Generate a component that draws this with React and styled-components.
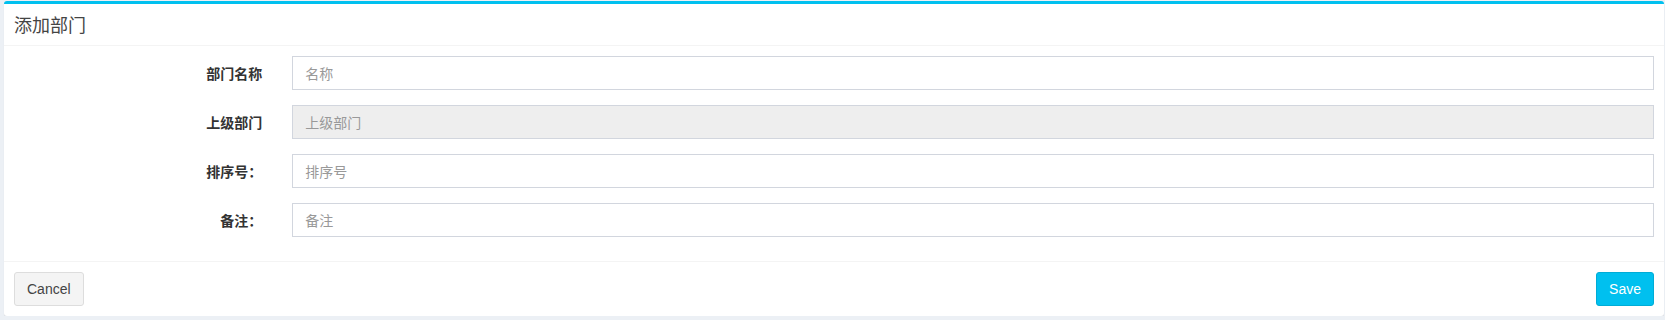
import React from "react";
import styled, { createGlobalStyle } from "styled-components";

const Global = createGlobalStyle`
  html, body { margin: 0; padding: 0; background: #ecf0f5; }
  body {
    font-family: "Liberation Sans", "Noto Sans CJK SC", sans-serif;
    font-size: 14px;
    color: #333;
  }
  * { box-sizing: border-box; }
`;

const Page = styled.div`
  padding: 1px 1px 0 4px;
`;

const Box = styled.div`
  background: #fff;
  border-top: 3px solid #00c0ef;
  border-radius: 3px;
  box-shadow: 0 1px 1px rgba(0, 0, 0, 0.1);
`;

const Header = styled.div`
  padding: 10px;
  border-bottom: 1px solid #f4f4f4;
`;

const Title = styled.h3`
  margin: 0;
  font-size: 18px;
  line-height: 21px;
  font-weight: 400;
  color: #444;
  font-family: "Noto Sans CJK SC", sans-serif;
`;

const Body = styled.div`
  padding: 10px 10px 9px;
`;

const Row = styled.div`
  display: flex;
  margin: 0 -15px 15px;
`;

const Label = styled.label`
  flex: 0 0 16.6667%;
  padding: 7px 15px 0;
  text-align: right;
  font-weight: 700;
  color: #333;
  line-height: 20px;
  font-family: "Noto Sans CJK SC", sans-serif;
`;

const Field = styled.div`
  flex: 0 0 83.3333%;
  padding: 0 15px;
`;

const Input = styled.input`
  display: block;
  width: 100%;
  height: 34px;
  padding: 6px 12px;
  font-size: 14px;
  font-family: "Noto Sans CJK SC", sans-serif;
  color: #555;
  border: 1px solid #d2d6de;
  border-radius: 0;
  background: ${(p) => (p.disabled ? "#eee" : "#fff")};
  outline: none;
  &::placeholder { color: #999; }
`;

const Footer = styled.div`
  display: flex;
  justify-content: space-between;
  padding: 10px;
  border-top: 1px solid #f4f4f4;
`;

const Button = styled.button`
  height: 34px;
  padding: 6px 12px;
  font-size: 14px;
  font-family: "Liberation Sans", sans-serif;
  border-radius: 3px;
  border: 1px solid ${(p) => (p.$primary ? "#00acd6" : "#ddd")};
  background: ${(p) => (p.$primary ? "#00c0ef" : "#f4f4f4")};
  color: ${(p) => (p.$primary ? "#fff" : "#444")};
  cursor: pointer;
`;

const fields = [
  { label: "部门名称", ph: "名称" },
  { label: "上级部门", ph: "上级部门", disabled: true },
  { label: "排序号：", ph: "排序号" },
  { label: "备注：", ph: "备注" },
];

export default function App() {
  return (
    <Page>
      <Global />
      <Box>
        <Header>
          <Title>添加部门</Title>
        </Header>
        <Body>
          {fields.map((f) => (
            <Row key={f.label}>
              <Label>{f.label}</Label>
              <Field>
                <Input placeholder={f.ph} disabled={f.disabled} />
              </Field>
            </Row>
          ))}
        </Body>
        <Footer>
          <Button>Cancel</Button>
          <Button $primary>Save</Button>
        </Footer>
      </Box>
    </Page>
  );
}
